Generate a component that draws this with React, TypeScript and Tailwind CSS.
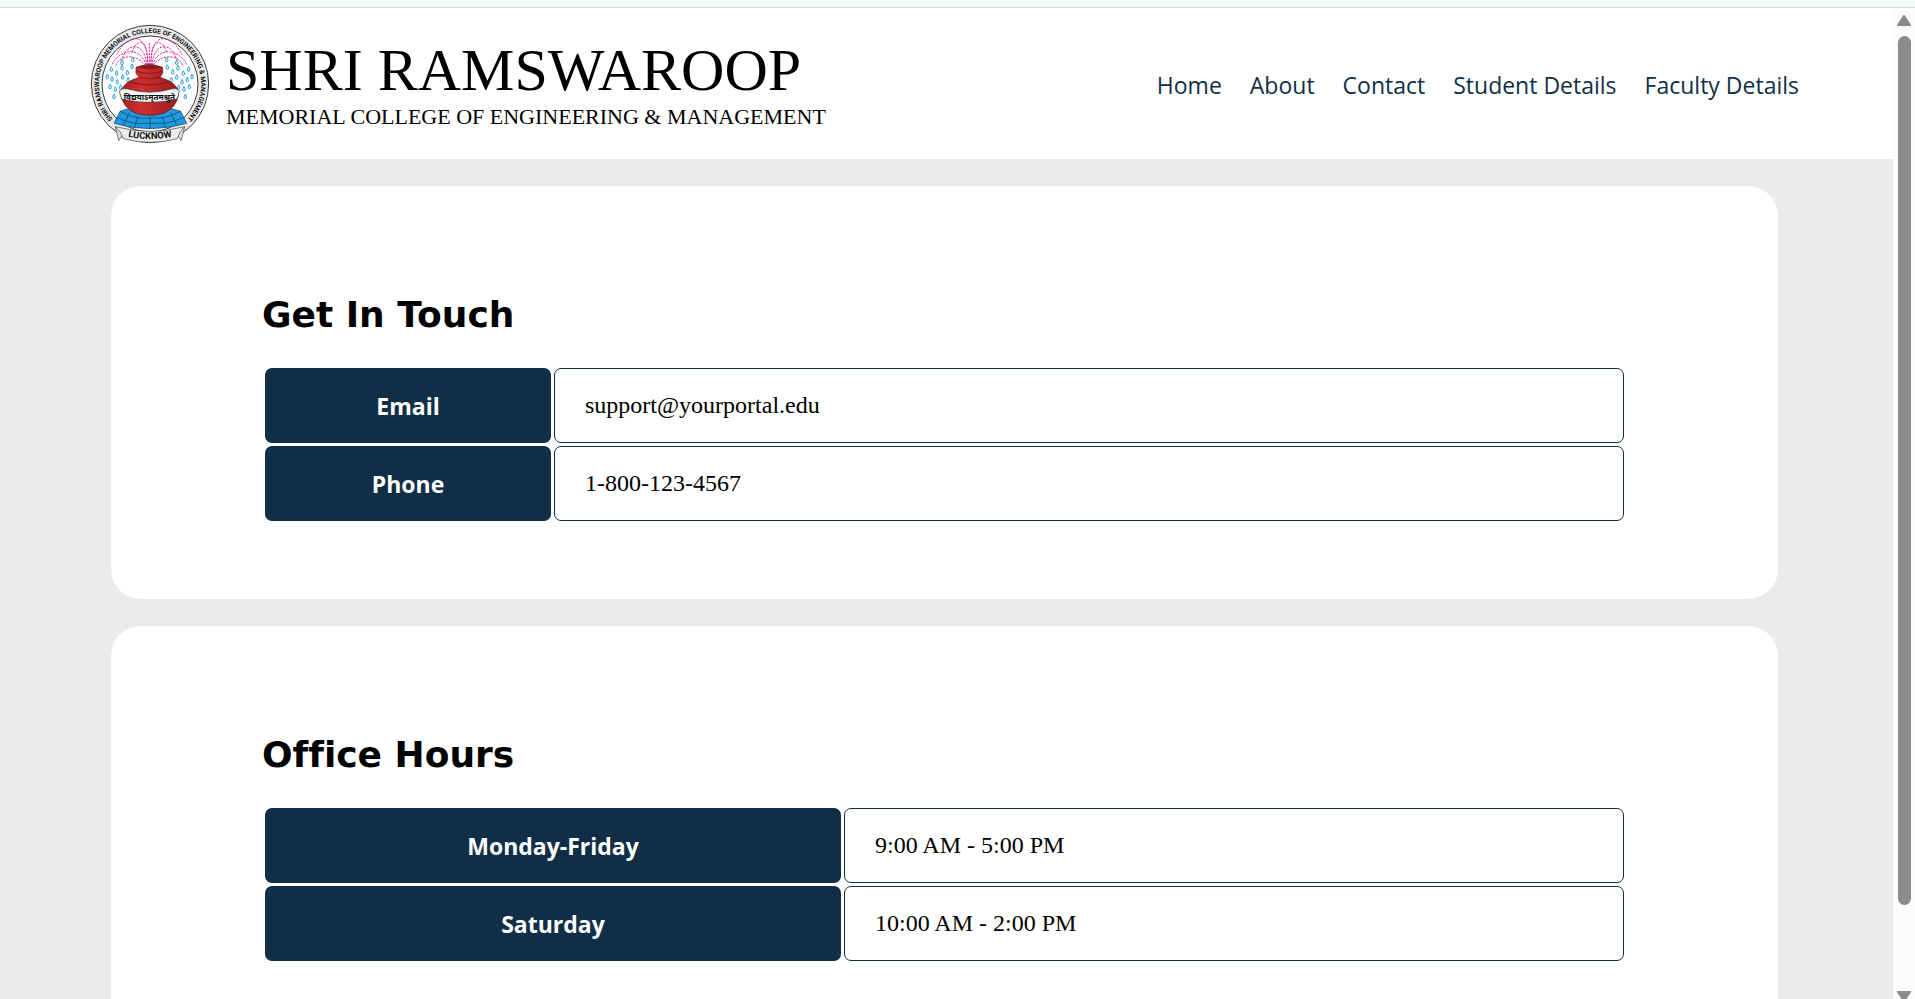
import React from "react";

const navItems = ["Home", "About", "Contact", "Student Details", "Faculty Details"];

const jets = [
  "M205 148 C204 110 202 85 186 80 C172 78 162 92 158 112",
  "M203 148 C198 112 186 92 164 92 C146 94 134 108 128 132",
  "M201 148 C190 116 168 104 146 108 C124 112 108 126 98 146",
  "M199 148 C180 124 156 120 138 124 C122 128 112 140 108 152",
  "M207 148 C204 100 194 70 170 68 C142 70 124 92 112 116",
  "M210 148 V78",
  "M215 148 C216 110 218 85 234 80 C248 78 258 92 262 112",
  "M217 148 C222 112 234 92 256 92 C274 94 286 108 292 132",
  "M219 148 C230 116 252 104 274 108 C296 112 312 126 322 146",
  "M221 148 C240 124 264 120 282 124 C298 128 308 140 312 152",
  "M213 148 C216 100 226 70 250 68 C278 70 296 92 308 116",
];

const drops: [number, number][] = [
  [96, 160], [112, 172], [128, 156], [144, 170], [158, 152], [84, 182], [98, 190],
  [114, 198], [130, 184], [146, 192], [92, 212], [108, 220], [124, 214], [104, 242],
  [160, 132], [128, 140], [262, 132], [292, 140], [264, 154], [280, 168], [296, 156],
  [312, 172], [328, 160], [338, 182], [324, 192], [308, 198], [292, 184], [276, 192],
  [330, 212], [314, 220], [298, 214], [318, 242],
];

function Crest() {
  return (
    <svg viewBox="32 24 360 360" className="size-[120px] shrink-0" role="img" aria-label="College crest">
      <defs>
        <path id="crest-ring" d="M112 320 A153 153 0 1 1 312 320" />
        <path id="crest-ribbon" d="M140 361 Q212 377 284 361" />
        <linearGradient id="crest-pot" x1="0" x2="1" y1="0" y2="0">
          <stop offset="0" stopColor="#a81e22" />
          <stop offset=".35" stopColor="#cf302e" />
          <stop offset="1" stopColor="#9e1a1f" />
        </linearGradient>
      </defs>
      <circle cx="212" cy="204" r="176" fill="#e9e9e9" stroke="#3c3c3c" strokeWidth="3" />
      <circle cx="212" cy="204" r="144" fill="#fff" stroke="#3c3c3c" strokeWidth="3" />
      <text fill="#111" fontFamily="Roboto, Liberation Sans, sans-serif" fontWeight="700" fontSize="20">
        <textPath href="#crest-ring" startOffset="50%" textAnchor="middle">
          SHRI RAMSWAROOP MEMORIAL COLLEGE OF ENGINEERING &amp; MANAGEMENT
        </textPath>
      </text>
      <g fill="none" stroke="#e0359b" strokeWidth="3" strokeDasharray="7 3">
        {jets.map((d) => (
          <path key={d} d={d} />
        ))}
      </g>
      <g fill="#d9f1fb" stroke="#2fa3d8" strokeWidth="3">
        {drops.map(([x, y]) => (
          <path key={`${x}-${y}`} d={`M${x} ${y - 8} q-8 13 0 14 q8 -1 0 -14z`} />
        ))}
      </g>
      <path d="M104 322 L122 286 L160 274 H262 L304 286 L322 322 Q270 338 212 338 Q156 338 104 322Z" fill="#1e9be0" stroke="#153a55" strokeWidth="2" />
      <path d="M122 286 Q150 302 180 306 H246 Q276 302 304 286 M112 304 Q146 320 172 322 H252 Q282 320 314 304 M176 300 L166 334 M212 304 V338 M248 300 L258 334 M150 290 L132 328 M274 290 L292 328" fill="none" stroke="#153a55" strokeWidth="2" />
      <path d="M170 154 Q210 138 250 154 V172 L242 184 Q296 200 298 234 Q292 276 252 292 Q210 304 170 292 Q130 276 124 234 Q126 200 180 184 L170 172Z" fill="url(#crest-pot)" stroke="#4a1214" strokeWidth="2" />
      <path d="M172 166 Q210 178 249 166 M180 184 Q210 193 242 184 M152 198 Q210 216 270 198" fill="none" stroke="#5c1518" strokeWidth="2" />
      <path d="M172 154 Q210 139 249 154 Q210 166 172 154Z" fill="#8a1a1e" />
      <path d="M120 224 Q130 214 146 219 Q210 238 276 219 Q290 214 300 224 Q298 240 292 250 Q210 268 128 250 Q122 238 120 224Z" fill="#f1f1f1" stroke="#333" strokeWidth="2" />
      <text x="210" y="251" textAnchor="middle" fill="#111" fontFamily="Noto Sans Devanagari, Noto Sans, sans-serif" fontWeight="700" fontSize="24">
        विद्ययाऽमृतमश्नुते
      </text>
      <path d="M108 332 L118 374 L126 362 L138 368 L142 356 Z M316 332 L306 374 L298 362 L286 368 L282 356Z" fill="#dedede" stroke="#444" strokeWidth="2" />
      <path d="M108 332 Q160 346 212 346 Q264 346 316 332 Q300 346 294 368 Q212 390 132 368 Q126 346 108 332Z" fill="#ececec" stroke="#444" strokeWidth="2" />
      <text fill="#111" fontFamily="Roboto, Liberation Sans, sans-serif" fontWeight="700" fontSize="28">
        <textPath href="#crest-ribbon" startOffset="50%" textAnchor="middle">LUCKNOW</textPath>
      </text>
    </svg>
  );
}

type Row = { label: string; value: string };

function InfoCard({ title, rows, labelWidth }: { title: string; rows: Row[]; labelWidth: string }) {
  return (
    <section className="rounded-[30px] bg-white px-[151px] pt-[107px] pb-[75px]">
      <h2 className="mb-[28px] font-['DejaVu_Sans',Verdana,sans-serif] text-[36px] leading-[44px] font-bold [font-variant-ligatures:none]">{title}</h2>
      <table className="w-full table-fixed border-separate border-spacing-[3px]">
        <colgroup>
          <col className={labelWidth} />
          <col />
        </colgroup>
        <tbody>
          {rows.map((row) => (
            <tr key={row.label} className="h-[75px]">
              <th scope="row" className="rounded-[7px] bg-[#102f46] pt-0.5 text-center font-['Open_Sans',sans-serif] text-[23px] font-bold text-white">
                {row.label}
              </th>
              <td className="rounded-[7px] border border-[#102f46] px-[30px] pb-0.5 text-2xl">{row.value}</td>
            </tr>
          ))}
        </tbody>
      </table>
    </section>
  );
}

export default function App() {
  return (
    <div className="flex h-screen flex-col overflow-hidden bg-white font-['Liberation_Serif',serif] text-black">
      <div className="h-2 shrink-0 border-b border-[#d0e4dc] bg-[#f4faf8]" />
      <div className="flex min-h-0 flex-1">
        <div className="min-w-0 flex-1 overflow-y-auto bg-[#ebebeb] [scrollbar-width:none]">
          <header className="flex h-[151px] items-center justify-between bg-white pr-[94px] pl-[90px]">
            <div className="flex items-center gap-4">
              <Crest />
              <div className="pt-1.5">
                <h1 className="text-[60px] leading-[60px]">SHRI RAMSWAROOP</h1>
                <p className="text-[22px] leading-[34px]">MEMORIAL COLLEGE OF ENGINEERING &amp; MANAGEMENT</p>
              </div>
            </div>
            <nav className="flex gap-7 pt-0.5 font-['Open_Sans',sans-serif] text-[23px] leading-8 text-[#102f46]">
              {navItems.map((item) => (
                <a key={item} href="#">
                  {item}
                </a>
              ))}
            </nav>
          </header>
          <main className="flex flex-col gap-[27px] pt-[27px] pr-[115px] pb-[27px] pl-[111px]">
            <InfoCard
              title="Get In Touch"
              labelWidth="w-[286px]"
              rows={[
                { label: "Email", value: "support@yourportal.edu" },
                { label: "Phone", value: "1-800-123-4567" },
              ]}
            />
            <InfoCard
              title="Office Hours"
              labelWidth="w-[576px]"
              rows={[
                { label: "Monday-Friday", value: "9:00 AM - 5:00 PM" },
                { label: "Saturday", value: "10:00 AM - 2:00 PM" },
              ]}
            />
          </main>
        </div>
        <div aria-hidden="true" className="flex w-[22px] shrink-0 flex-col items-center overflow-hidden bg-[#fcfcfc] pt-[7px]">
          <svg viewBox="0 0 14 11" className="h-[11px] w-[14px] shrink-0">
            <path d="M7 1 L13 10 H1Z" fill="#8b8b8b" stroke="#8b8b8b" strokeWidth="2" strokeLinejoin="round" />
          </svg>
          <div className="mt-[10px] mb-[86px] w-[13px] flex-1 rounded-full bg-[#8b8b8b]" />
          <svg viewBox="0 0 14 8" className="h-2 w-[14px] shrink-0">
            <path d="M1 1 H13 L7 10Z" fill="#8b8b8b" stroke="#8b8b8b" strokeWidth="2" strokeLinejoin="round" />
          </svg>
        </div>
      </div>
    </div>
  );
}
